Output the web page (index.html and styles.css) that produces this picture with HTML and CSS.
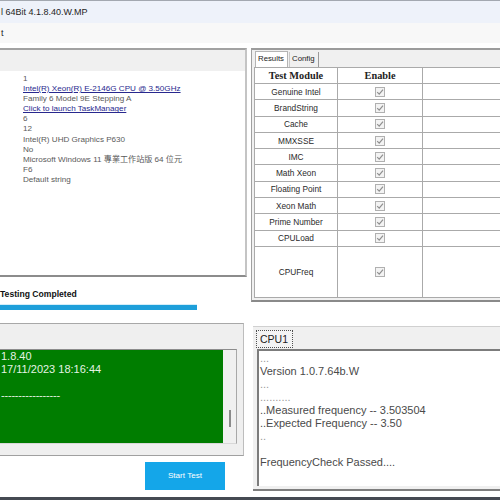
FILE: index.html
```html
<!DOCTYPE html>
<html>
<head>
<meta charset="utf-8">
<link rel="stylesheet" href="styles.css">
</head>
<body>
<div class="window">
  <div class="titlebar"><span class="title">l 64Bit 4.1.8.40.W.MP</span></div>
  <div class="menubar"><span class="menu">t</span></div>
  <div class="client">
    <div class="leftcol">
      <div class="info-panel">
        <div class="info-head"></div>
        <div class="info-body">
          <div>1</div>
          <div class="link">Intel(R) Xeon(R) E-2146G CPU @ 3.50GHz</div>
          <div>Family 6 Model 9E Stepping A</div>
          <div class="link">Click to launch TaskManager</div>
          <div>6</div>
          <div>12</div>
          <div>Intel(R) UHD Graphics P630</div>
          <div>No</div>
          <div>Microsoft Windows 11 專業工作站版 64 位元</div>
          <div>F6</div>
          <div>Default string</div>
        </div>
      </div>
      <div class="status">Testing Completed</div>
      <div class="progress"><div class="bar"></div></div>
      <div class="log-panel">
        <div class="log-box">
          <div class="log-text">
            <div class="l1">1.8.40</div>
            <div class="l2">17/11/2023 18:16:44</div>
            <div>&nbsp;</div>
            <div class="dash">-----------------</div>
          </div>
          <div class="scroll"><div class="thumb"></div></div>
        </div>
      </div>
      <div class="btnrow"><div class="start">Start Test</div></div>
    </div>
    <div class="rightcol">
      <div class="results-panel">
        <div class="tabs"><span class="tab active">Results</span><span class="tab">Config</span></div>
        <table class="grid">
          <colgroup><col class="c1"><col class="c2"><col class="c3"></colgroup>
          <tr class="hdr"><th>Test Module</th><th>Enable</th><th></th></tr>
          <tr><td>Genuine Intel</td><td><svg class="chk" viewBox="0 0 10 10"><rect x="0.5" y="0.5" width="9" height="9"/><path d="M2.2 5.2 L4.2 7.2 L8 2.6"/></svg></td><td></td></tr>
          <tr><td>BrandString</td><td><svg class="chk" viewBox="0 0 10 10"><rect x="0.5" y="0.5" width="9" height="9"/><path d="M2.2 5.2 L4.2 7.2 L8 2.6"/></svg></td><td></td></tr>
          <tr><td>Cache</td><td><svg class="chk" viewBox="0 0 10 10"><rect x="0.5" y="0.5" width="9" height="9"/><path d="M2.2 5.2 L4.2 7.2 L8 2.6"/></svg></td><td></td></tr>
          <tr><td>MMXSSE</td><td><svg class="chk" viewBox="0 0 10 10"><rect x="0.5" y="0.5" width="9" height="9"/><path d="M2.2 5.2 L4.2 7.2 L8 2.6"/></svg></td><td></td></tr>
          <tr><td>IMC</td><td><svg class="chk" viewBox="0 0 10 10"><rect x="0.5" y="0.5" width="9" height="9"/><path d="M2.2 5.2 L4.2 7.2 L8 2.6"/></svg></td><td></td></tr>
          <tr><td>Math Xeon</td><td><svg class="chk" viewBox="0 0 10 10"><rect x="0.5" y="0.5" width="9" height="9"/><path d="M2.2 5.2 L4.2 7.2 L8 2.6"/></svg></td><td></td></tr>
          <tr><td>Floating Point</td><td><svg class="chk" viewBox="0 0 10 10"><rect x="0.5" y="0.5" width="9" height="9"/><path d="M2.2 5.2 L4.2 7.2 L8 2.6"/></svg></td><td></td></tr>
          <tr><td>Xeon Math</td><td><svg class="chk" viewBox="0 0 10 10"><rect x="0.5" y="0.5" width="9" height="9"/><path d="M2.2 5.2 L4.2 7.2 L8 2.6"/></svg></td><td></td></tr>
          <tr><td>Prime Number</td><td><svg class="chk" viewBox="0 0 10 10"><rect x="0.5" y="0.5" width="9" height="9"/><path d="M2.2 5.2 L4.2 7.2 L8 2.6"/></svg></td><td></td></tr>
          <tr><td>CPULoad</td><td><svg class="chk" viewBox="0 0 10 10"><rect x="0.5" y="0.5" width="9" height="9"/><path d="M2.2 5.2 L4.2 7.2 L8 2.6"/></svg></td><td></td></tr>
          <tr class="tall"><td>CPUFreq</td><td><svg class="chk" viewBox="0 0 10 10"><rect x="0.5" y="0.5" width="9" height="9"/><path d="M2.2 5.2 L4.2 7.2 L8 2.6"/></svg></td><td></td></tr>
        </table>
        <div class="grid-foot"></div>
      </div>
      <div class="cpu-panel">
        <div class="cpu-tabs"><span class="cpu-tab">CPU1</span></div>
        <div class="cpu-box">
          <div class="dots">...</div>
          <div>Version 1.0.7.64b.W</div>
          <div class="dots">...</div>
          <div class="dots">..........</div>
          <div>..Measured frequency -- 3.503504</div>
          <div>..Expected Frequency -- 3.50</div>
          <div class="dots">..</div>
          <div>&nbsp;</div>
          <div>FrequencyCheck Passed....</div>
        </div>
      </div>
    </div>
  </div>
  <div class="taskbar"></div>
</div>
</body>
</html>
```
FILE: styles.css
```css
* { box-sizing: border-box; }
html, body { margin: 0; padding: 0; }
body { background: #fff; font-family: "Liberation Sans", Arial, "Noto Sans CJK TC", sans-serif; }

.window { width: 500px; height: 500px; overflow: hidden; display: flex; flex-direction: column; background: #fff; }

.titlebar { height: 23px; flex: none; background: #eef2fa; border-top: 1px solid #a3a8b0; }
.title { display: block; font-size: 9px; line-height: 22px; color: #1e1e1e; padding-left: 1px; white-space: nowrap; }

.menubar { height: 20px; flex: none; background: #f8f8f8; }
.menu { display: block; font-size: 9px; line-height: 20px; color: #1e1e1e; padding-left: 1px; }

.client { height: 454px; flex: none; display: flex; background: #fff; }

.leftcol { width: 248px; flex: none; display: flex; flex-direction: column; padding-top: 5px; }

.info-panel { width: 247px; height: 229px; flex: none; background: #fff; border-top: 2px solid #a2a2a2; border-right: 2px solid #c4c4c4; border-bottom: 2px solid #8c8c8c; display: flex; flex-direction: column; }
.info-head { height: 21px; flex: none; background: #f0f0f0; }
.info-body { padding: 3px 0 0 23px; font-size: 8.1px; line-height: 10.1px; color: #5a5a5a; font-family: "Liberation Sans", Arial, "Noto Sans CJK TC", sans-serif; white-space: nowrap; }
.info-body .link { color: #28288e; text-decoration: underline; }

.status { margin-top: 11px; font-size: 8.6px; font-weight: bold; line-height: 12px; color: #111; white-space: nowrap; }

.progress { margin-top: 4px; width: 197px; height: 6px; border-top: 1px solid #d4eef9; background: #1e9fda; }

.log-panel { margin-top: 13px; width: 244px; height: 133px; flex: none; background: #efefef; border-top: 1px solid #a8a8a8; border-right: 1px solid #bdbdbd; border-bottom: 1px solid #a0a0a0; padding-top: 25px; }
.log-box { width: 237px; height: 95px; display: flex; border-top: 1px solid #8c8c8c; border-right: 1px solid #a8a8a8; border-bottom: 1px solid #d8d8d8; }
.log-text { flex: 1; background: #007d00; color: #e4f3e4; font-size: 11px; line-height: 13px; white-space: nowrap; padding-left: 1px; }
.log-text .dash { letter-spacing: -0.2px; }
.scroll { width: 13px; flex: none; background: #f0f0f0; display: flex; flex-direction: column; align-items: center; padding-top: 60px; }
.thumb { width: 2px; height: 17px; background: #8a8a8a; }

.btnrow { margin-top: 6px; padding-left: 145px; }
.start { width: 80px; height: 28px; background: #14a6e9; color: #fff; font-size: 8.1px; line-height: 28px; text-align: center; }

.rightcol { flex: 1; display: flex; flex-direction: column; padding-top: 5px; padding-left: 3px; }

.results-panel { width: 260px; flex: none; background: #f0f0f0; border-top: 2px solid #9c9c9c; border-left: 1px solid #a0a0a0; border-bottom: 2px solid #8a8a8a; padding-left: 2px; }
.tabs { height: 17px; display: flex; align-items: flex-end; padding-left: 1px; }
.tab { height: 15px; font-size: 7.8px; line-height: 14px; color: #222; padding: 0 3px 0 2px; border-right: 1px solid #9a9a9a; }
.tab.active { background: #fff; border: 1px solid #b4b4b4; border-bottom: none; height: 16px; width: 33px; }
.tab + .tab { margin-left: 1px; padding-left: 2px; border-left: 1px solid #c8c8c8; }

.grid { border-collapse: collapse; table-layout: fixed; width: 262px; background: #fff; border: 1px solid #a0a0a0; }
.grid col.c1 { width: 83px; }
.grid col.c2 { width: 85px; }
.grid col.c3 { width: 94px; }
.grid td, .grid th { border: 1px solid #aaaaaa; padding: 0; text-align: center; vertical-align: middle; }
.grid tr { height: 16.3px; }
.grid tr.hdr { height: 16px; }
.grid tr.tall { height: 51px; }
.grid th { font-family: "Liberation Serif", "Times New Roman", serif; font-weight: bold; font-size: 10.3px; color: #222; line-height: 12px; }
.grid td { font-size: 8.3px; color: #2a2a2a; line-height: 10px; }
.chk { width: 10px; height: 10px; display: block; margin: 0 auto; }
.chk rect { fill: #f3f3f3; stroke: #b0b0b0; stroke-width: 1; }
.chk path { fill: none; stroke: #8f8f8f; stroke-width: 1.2; }
.grid-foot { height: 2px; }

.cpu-panel { margin-top: 24px; margin-left: 2px; width: 260px; height: 165px; flex: none; background: #f0f0f0; border-top: 1px solid #d0d0d0; border-bottom: 2px solid #7e7e7e; display: flex; flex-direction: column; }
.cpu-tabs { height: 22px; flex: none; padding: 2px 0 0 3px; }
.cpu-tab { display: inline-block; height: 18px; padding: 0 4px 0 3px; border: 1px dotted #505050; background: #f4f4f4; font-size: 10.5px; line-height: 16px; color: #222; }
.cpu-box { margin-left: 4px; height: 137px; flex: none; background: #fff; border-top: 2px solid #7c7c7c; border-left: 2px solid #7c7c7c; padding: 1px 0 0 1px; font-size: 11px; line-height: 13px; color: #4a4a4a; white-space: nowrap; }
.cpu-box .dots { color: #9a9a9a; }

.taskbar { height: 3px; flex: none; background: #454a52; }
```
